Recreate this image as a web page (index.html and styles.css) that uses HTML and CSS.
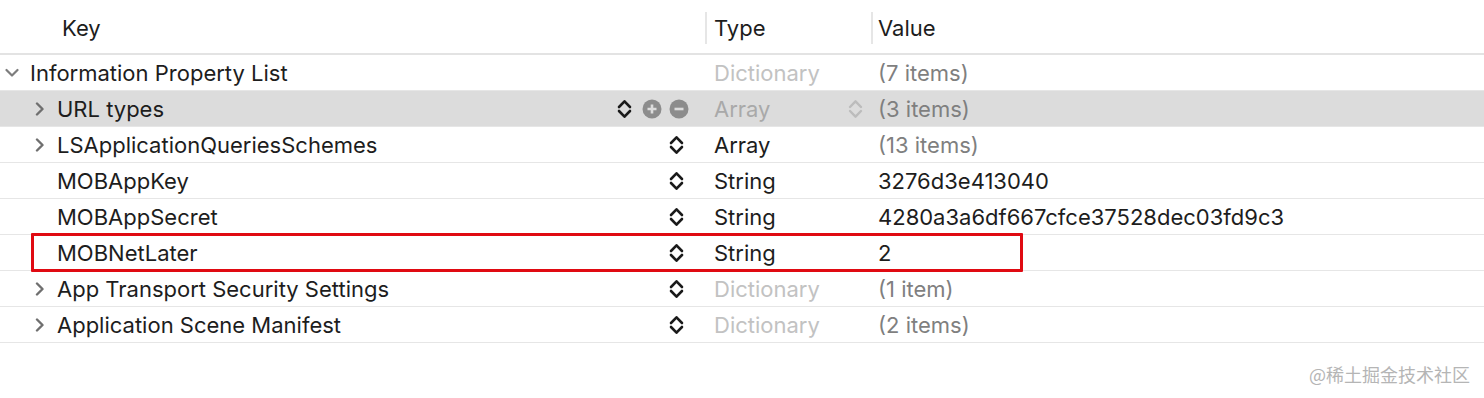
FILE: index.html
```html
<!DOCTYPE html>
<html>
<head>
<meta charset="utf-8">
<link rel="stylesheet" href="styles.css">
</head>
<body>
<div class="plist">
  <div class="header">
    <div class="hcell hkey">Key</div>
    <div class="hcell htype">Type</div>
    <div class="hcell hvalue">Value</div>
  </div>

  <div class="row">
    <div class="key lvl0">
      <svg class="disc" width="14" height="10" viewBox="0 0 14 10"><polyline points="1.5,2 7,7.5 12.5,2" fill="none" stroke="#7d7d7d" stroke-width="2.2" stroke-linecap="round" stroke-linejoin="round"/></svg>
      <span class="ktext">Information Property List</span>
    </div>
    <div class="type dim">Dictionary</div>
    <div class="value muted">(7 items)</div>
  </div>

  <div class="row selected">
    <div class="key lvl1">
      <svg class="disc" width="10" height="14" viewBox="0 0 10 14"><polyline points="2,1.5 7.5,7 2,12.5" fill="none" stroke="#6f6f6f" stroke-width="2.4" stroke-linecap="round" stroke-linejoin="round"/></svg>
      <span class="ktext">URL types</span>
      <div class="controls sel">
        <svg class="stepper" width="15" height="22" viewBox="0 0 15 22"><polyline points="2,9 7.5,3.3 13,9" fill="none" stroke="#1a1a1a" stroke-width="2.6" stroke-linecap="round" stroke-linejoin="round"/><polyline points="2,13 7.5,18.7 13,13" fill="none" stroke="#1a1a1a" stroke-width="2.6" stroke-linecap="round" stroke-linejoin="round"/></svg>
        <svg class="circ plus" width="20" height="20" viewBox="0 0 20 20"><circle cx="10" cy="10" r="9.5" fill="#8c8c8c"/><path d="M5.5 10h9M10 5.5v9" stroke="#dcdcdc" stroke-width="2.6"/></svg>
        <svg class="circ" width="20" height="20" viewBox="0 0 20 20"><circle cx="10" cy="10" r="9.5" fill="#8c8c8c"/><path d="M5.5 10h9" stroke="#dcdcdc" stroke-width="2.6"/></svg>
      </div>
    </div>
    <div class="type seltype">
      <span>Array</span>
      <svg class="stepper" width="15" height="22" viewBox="0 0 15 22"><polyline points="2,9 7.5,3.3 13,9" fill="none" stroke="#bcbcbc" stroke-width="2.4" stroke-linecap="round" stroke-linejoin="round"/><polyline points="2,13 7.5,18.7 13,13" fill="none" stroke="#bcbcbc" stroke-width="2.4" stroke-linecap="round" stroke-linejoin="round"/></svg>
    </div>
    <div class="value muted">(3 items)</div>
  </div>

  <div class="row">
    <div class="key lvl1">
      <svg class="disc" width="10" height="14" viewBox="0 0 10 14"><polyline points="2,1.5 7.5,7 2,12.5" fill="none" stroke="#6f6f6f" stroke-width="2.4" stroke-linecap="round" stroke-linejoin="round"/></svg>
      <span class="ktext">LSApplicationQueriesSchemes</span>
      <div class="controls">
        <svg class="stepper" width="15" height="22" viewBox="0 0 15 22"><polyline points="2,9 7.5,3.3 13,9" fill="none" stroke="#1a1a1a" stroke-width="2.6" stroke-linecap="round" stroke-linejoin="round"/><polyline points="2,13 7.5,18.7 13,13" fill="none" stroke="#1a1a1a" stroke-width="2.6" stroke-linecap="round" stroke-linejoin="round"/></svg>
      </div>
    </div>
    <div class="type">Array</div>
    <div class="value muted">(13 items)</div>
  </div>

  <div class="row">
    <div class="key lvl1 leaf">
      <span class="ktext">MOBAppKey</span>
      <div class="controls">
        <svg class="stepper" width="15" height="22" viewBox="0 0 15 22"><polyline points="2,9 7.5,3.3 13,9" fill="none" stroke="#1a1a1a" stroke-width="2.6" stroke-linecap="round" stroke-linejoin="round"/><polyline points="2,13 7.5,18.7 13,13" fill="none" stroke="#1a1a1a" stroke-width="2.6" stroke-linecap="round" stroke-linejoin="round"/></svg>
      </div>
    </div>
    <div class="type">String</div>
    <div class="value">3276d3e413040</div>
  </div>

  <div class="row">
    <div class="key lvl1 leaf">
      <span class="ktext">MOBAppSecret</span>
      <div class="controls">
        <svg class="stepper" width="15" height="22" viewBox="0 0 15 22"><polyline points="2,9 7.5,3.3 13,9" fill="none" stroke="#1a1a1a" stroke-width="2.6" stroke-linecap="round" stroke-linejoin="round"/><polyline points="2,13 7.5,18.7 13,13" fill="none" stroke="#1a1a1a" stroke-width="2.6" stroke-linecap="round" stroke-linejoin="round"/></svg>
      </div>
    </div>
    <div class="type">String</div>
    <div class="value">4280a3a6df667cfce37528dec03fd9c3</div>
  </div>

  <div class="row highlighted">
    <div class="key lvl1 leaf">
      <span class="ktext">MOBNetLater</span>
      <div class="controls">
        <svg class="stepper" width="15" height="22" viewBox="0 0 15 22"><polyline points="2,9 7.5,3.3 13,9" fill="none" stroke="#1a1a1a" stroke-width="2.6" stroke-linecap="round" stroke-linejoin="round"/><polyline points="2,13 7.5,18.7 13,13" fill="none" stroke="#1a1a1a" stroke-width="2.6" stroke-linecap="round" stroke-linejoin="round"/></svg>
      </div>
    </div>
    <div class="type">String</div>
    <div class="value">2</div>
    <div class="redbox"></div>
  </div>

  <div class="row">
    <div class="key lvl1">
      <svg class="disc" width="10" height="14" viewBox="0 0 10 14"><polyline points="2,1.5 7.5,7 2,12.5" fill="none" stroke="#6f6f6f" stroke-width="2.4" stroke-linecap="round" stroke-linejoin="round"/></svg>
      <span class="ktext">App Transport Security Settings</span>
      <div class="controls">
        <svg class="stepper" width="15" height="22" viewBox="0 0 15 22"><polyline points="2,9 7.5,3.3 13,9" fill="none" stroke="#1a1a1a" stroke-width="2.6" stroke-linecap="round" stroke-linejoin="round"/><polyline points="2,13 7.5,18.7 13,13" fill="none" stroke="#1a1a1a" stroke-width="2.6" stroke-linecap="round" stroke-linejoin="round"/></svg>
      </div>
    </div>
    <div class="type dim">Dictionary</div>
    <div class="value muted">(1 item)</div>
  </div>

  <div class="row">
    <div class="key lvl1">
      <svg class="disc" width="10" height="14" viewBox="0 0 10 14"><polyline points="2,1.5 7.5,7 2,12.5" fill="none" stroke="#6f6f6f" stroke-width="2.4" stroke-linecap="round" stroke-linejoin="round"/></svg>
      <span class="ktext">Application Scene Manifest</span>
      <div class="controls">
        <svg class="stepper" width="15" height="22" viewBox="0 0 15 22"><polyline points="2,9 7.5,3.3 13,9" fill="none" stroke="#1a1a1a" stroke-width="2.6" stroke-linecap="round" stroke-linejoin="round"/><polyline points="2,13 7.5,18.7 13,13" fill="none" stroke="#1a1a1a" stroke-width="2.6" stroke-linecap="round" stroke-linejoin="round"/></svg>
      </div>
    </div>
    <div class="type dim">Dictionary</div>
    <div class="value muted">(2 items)</div>
  </div>
</div>
<div class="watermark">@稀土掘金技术社区</div>
</body>
</html>
```

FILE: styles.css
```css
html, body {
  margin: 0;
  padding: 0;
  background: #ffffff;
}

body {
  font-family: "Inter", "Liberation Sans", sans-serif;
  font-size: 22px;
  color: #1d1d1d;
  width: 1484px;
  height: 398px;
  overflow: hidden;
}

.plist {
  display: flex;
  flex-direction: column;
}

.header {
  display: grid;
  grid-template-columns: 705px 166px 1fr;
  height: 53px;
  border-bottom: 2px solid #e3e3e3;
  align-items: center;
}

.hcell {
  height: 32px;
  display: flex;
  align-items: center;
  margin-top: 2px;
}

.hkey {
  padding-left: 62px;
}

.htype, .hvalue {
  border-left: 2px solid #e6e6e6;
}

.htype {
  padding-left: 7px;
}

.hvalue {
  padding-left: 5px;
}

.row {
  position: relative;
  display: grid;
  grid-template-columns: 705px 166px 1fr;
  height: 35px;
  border-bottom: 1px solid #e6e6e6;
  align-items: center;
}

.row.selected {
  background: #dcdcdc;
}

.key {
  display: flex;
  align-items: center;
  height: 100%;
}

.lvl0 {
  padding-left: 5px;
}

.lvl0 .disc {
  margin-right: 11px;
}

.lvl1 {
  padding-left: 35px;
}

.lvl1 .disc {
  margin-right: 12px;
}

.lvl1.leaf {
  padding-left: 57px;
}

.controls {
  margin-left: auto;
  margin-right: 21px;
  display: flex;
  align-items: center;
}

.controls.sel {
  margin-right: 16px;
}

.controls .stepper {
  display: block;
}

.controls.sel .stepper {
  margin-right: 10px;
}

.circ {
  display: block;
}

.circ.plus {
  margin-right: 7px;
}

.type {
  padding-left: 9px;
  display: flex;
  align-items: center;
  height: 100%;
}

.seltype {
  color: #a9a9a9;
  justify-content: space-between;
  padding-right: 8px;
}

.value {
  padding-left: 7px;
}

.dim {
  color: #c2c2c2;
}

.muted {
  color: #7f7f7f;
}

.redbox {
  position: absolute;
  left: 31px;
  top: -2px;
  width: 986px;
  height: 33px;
  border: 3px solid #e00a12;
  border-radius: 1px;
  pointer-events: none;
}

.watermark {
  text-align: right;
  padding-right: 14px;
  margin-top: 18px;
  font-family: "Noto Sans CJK SC", sans-serif;
  font-size: 18px;
  color: #b5b5b5;
}
```
